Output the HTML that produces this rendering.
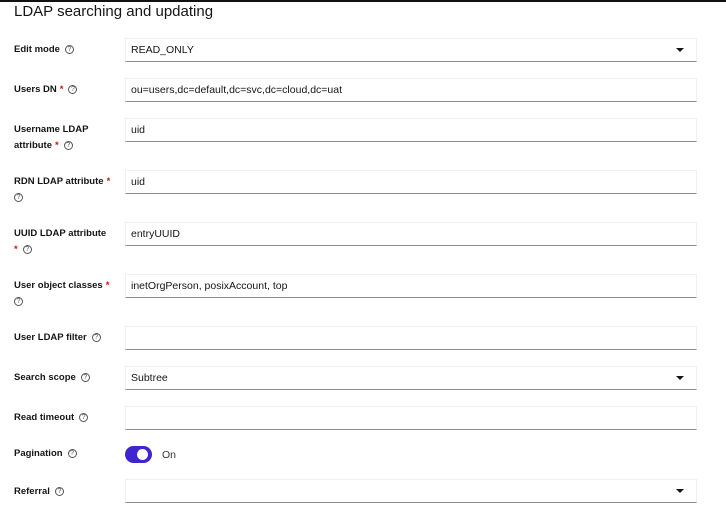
<!DOCTYPE html>
<html><head><style>
*{box-sizing:border-box;margin:0;padding:0}
body{width:726px;height:530px;background:#fff;font-family:"Liberation Sans",sans-serif;color:#151515;position:relative;overflow:hidden}
.top{position:absolute;left:0;top:0;width:726px;height:2px;background:#111}
h1{position:absolute;left:14px;top:3px;font-size:15px;font-weight:normal}
.l{position:absolute;left:14px;font-size:9.5px;font-weight:bold;line-height:16px;width:105px}
.q{display:inline-block;width:9px;height:9px;border:1px solid #555;border-radius:50%;font-size:7px;line-height:7px;text-align:center;font-weight:normal;color:#555;margin-left:5px;vertical-align:middle}
.r{color:#c9190b;margin-left:3px}
.i{position:absolute;left:125px;width:572px;height:24px;border:1px solid #f0f0f0;border-bottom:1px solid #8a8d90;font-size:10.5px;line-height:23px;padding-left:5px;color:#151515}
.c{position:absolute;right:12px;top:9px;border-left:4px solid transparent;border-right:4px solid transparent;border-top:4px solid #151515}
.t{position:absolute;left:125px;top:446px;width:27px;height:17px;border-radius:9px;background:#3e25d0}
.t:after{content:"";position:absolute;right:4px;top:3px;width:11px;height:11px;border-radius:50%;background:#fff}
</style></head><body>
<div class="top"></div>
<h1>LDAP searching and updating</h1>
<div class="l" style="top:42px">Edit mode<span class="q">?</span></div>
<div class="i" style="top:38px">READ_ONLY<span class="c"></span></div>
<div class="l" style="top:82px">Users DN<span class="r">*</span><span class="q">?</span></div>
<div class="i" style="top:78px">ou=users,dc=default,dc=svc,dc=cloud,dc=uat</div>
<div class="l" style="top:122px">Username LDAP attribute<span class="r">*</span><span class="q">?</span></div>
<div class="i" style="top:118px">uid</div>
<div class="l" style="top:174px;width:100px">RDN LDAP attribute<span class="r">*</span><span class="q" style="margin-left:0">?</span></div>
<div class="i" style="top:170px">uid</div>
<div class="l" style="top:226px;width:95px">UUID LDAP attribute <span class="r" style="margin-left:0">*</span><span class="q">?</span></div>
<div class="i" style="top:222px">entryUUID</div>
<div class="l" style="top:278px;width:100px">User object classes<span class="r">*</span><span class="q" style="margin-left:0">?</span></div>
<div class="i" style="top:274px">inetOrgPerson, posixAccount, top</div>
<div class="l" style="top:330px">User LDAP filter<span class="q">?</span></div>
<div class="i" style="top:326px"></div>
<div class="l" style="top:370px">Search scope<span class="q">?</span></div>
<div class="i" style="top:366px">Subtree<span class="c"></span></div>
<div class="l" style="top:410px">Read timeout<span class="q">?</span></div>
<div class="i" style="top:406px"></div>
<div class="l" style="top:446px">Pagination<span class="q">?</span></div>
<div class="t"></div>
<div style="position:absolute;left:162px;top:449px;font-size:10.5px;color:#333">On</div>
<div class="l" style="top:484px">Referral<span class="q">?</span></div>
<div class="i" style="top:479px"><span class="c"></span></div>
</body></html>
